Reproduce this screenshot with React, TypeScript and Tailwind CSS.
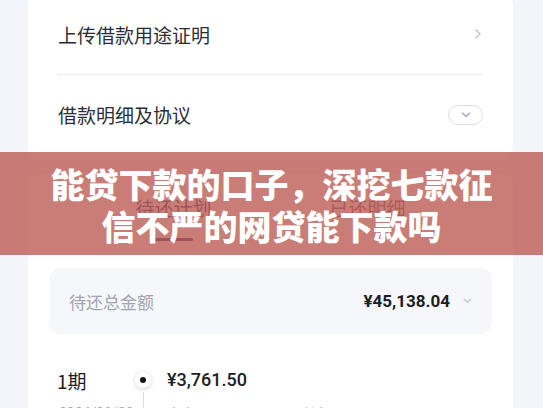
import React from "react";

const cjk = { fontFamily: '"Noto Sans CJK SC", "Noto Sans", sans-serif' };
const num = { fontFamily: 'Roboto, "Noto Sans CJK SC", sans-serif' };

function Chevron({ className }: { className?: string }) {
  return (
    <svg width="8" height="12" viewBox="0 0 8 12" className={className} fill="none">
      <path d="M2 2l4 4-4 4" stroke="currentColor" strokeWidth="1.6" strokeLinecap="round" strokeLinejoin="round" />
    </svg>
  );
}

function ChevronDown({ className, w = 10 }: { className?: string; w?: number }) {
  return (
    <svg width={w} height="6" viewBox="0 0 10 6" className={className} fill="none">
      <path d="M1.5 1.2L5 4.4l3.5-3.2" stroke="currentColor" strokeWidth="1.7" strokeLinecap="round" strokeLinejoin="round" />
    </svg>
  );
}

export default function App() {
  return (
    <div className="relative h-[408px] w-[543px] overflow-hidden bg-[#f3f5fa]" style={cjk}>
      <div className="flex flex-col px-[28px] pr-[30px]">
        {/* Card 1 */}
        <div className="-mt-[6px] rounded-[12px] bg-white px-[30px] pb-[7px]">
          <div className="flex h-[80px] items-center justify-between">
            <span className="text-[19px] leading-none text-[#2a2d37]">上传借款用途证明</span>
            <Chevron className="mr-[1px] text-[#c3c6d1]" />
          </div>
          <div className="h-px bg-[#eceef3]" />
          <div className="flex h-[79px] items-center justify-between">
            <span className="text-[19px] leading-none text-[#2a2d37]">借款明细及协议</span>
            <div className="flex h-[20px] w-[35px] items-center justify-center rounded-full border border-[#dcdfe7]">
              <ChevronDown className="text-[#aeb3c2]" />
            </div>
          </div>
        </div>

        {/* Card 2 */}
        <div className="mt-[13px] rounded-[12px] bg-white px-[21px] pb-[40px]">
          <div className="flex justify-center gap-[118px]">
            <div className="flex flex-col items-center pt-[24px]">
              <span className="text-[19px] leading-[20px] text-[#262a6e]">待还计划</span>
              <div className="mt-[20px] h-[3px] w-[40px] rounded-full bg-[#2f2b6e]" />
            </div>
            <div className="flex flex-col items-center pt-[24px]">
              <span className="text-[19px] leading-[20px] text-[#55585f]">已还明细</span>
              <div className="mt-[20px] h-[3px] w-[40px]" />
            </div>
          </div>

          <div className="mt-[27px] flex h-[66px] items-center justify-between rounded-[12px] bg-[#f6f7fa] pl-[20px] pr-[20px]">
            <span className="text-[17px] leading-none text-[#a2a5ae]">待还总金额</span>
            <div className="flex items-center gap-[13px]">
              <span className="text-[17px] font-bold leading-none text-[#1c1e26]" style={num}>¥45,138.04</span>
              <ChevronDown className="text-[#c9ccd4]" w={9} />
            </div>
          </div>

          <div className="mt-[34px] flex h-[24px] items-center">
            <span className="w-[86px] pl-[8px] text-[19px] leading-none text-[#1c1e26]">1期</span>
            <div className="relative flex h-[16px] w-[16px] items-center justify-center rounded-full bg-white shadow-[0_1px_4px_rgba(120,130,170,0.35)]">
              <div className="h-[6px] w-[6px] rounded-full bg-[#111318]" />
            </div>
            <span className="ml-[16px] text-[18px] font-medium leading-none text-[#1c1e26]" style={num}>¥3,761.50</span>
          </div>
          <div className="flex h-[40px]">
            <div className="w-[86px] pl-[10px] pt-[14px] text-[14px] leading-none text-[#a2a5ae]" style={num}>2024/08/20</div>
            <div className="flex w-[16px] justify-center">
              <div className="h-full w-px bg-[#d9dbe2]" />
            </div>
            <div className="ml-[16px] flex gap-[40px] pt-[14px] text-[14px] leading-none text-[#a2a5ae]">
              <span>本金 ¥3,512.08</span>
              <span>利息 ¥249.42</span>
            </div>
          </div>
        </div>
      </div>

      {/* Overlay banner */}
      <div className="absolute left-0 right-0 top-[152px] flex h-[103px] items-center justify-center bg-[rgba(189,92,85,0.8)] pt-[2px]">
        <div className="text-center text-[34px] font-black leading-[42px] text-white" style={cjk}>
          <div>能贷下款的口子，深挖七款征</div>
          <div>信不严的网贷能下款吗</div>
        </div>
      </div>
    </div>
  );
}
